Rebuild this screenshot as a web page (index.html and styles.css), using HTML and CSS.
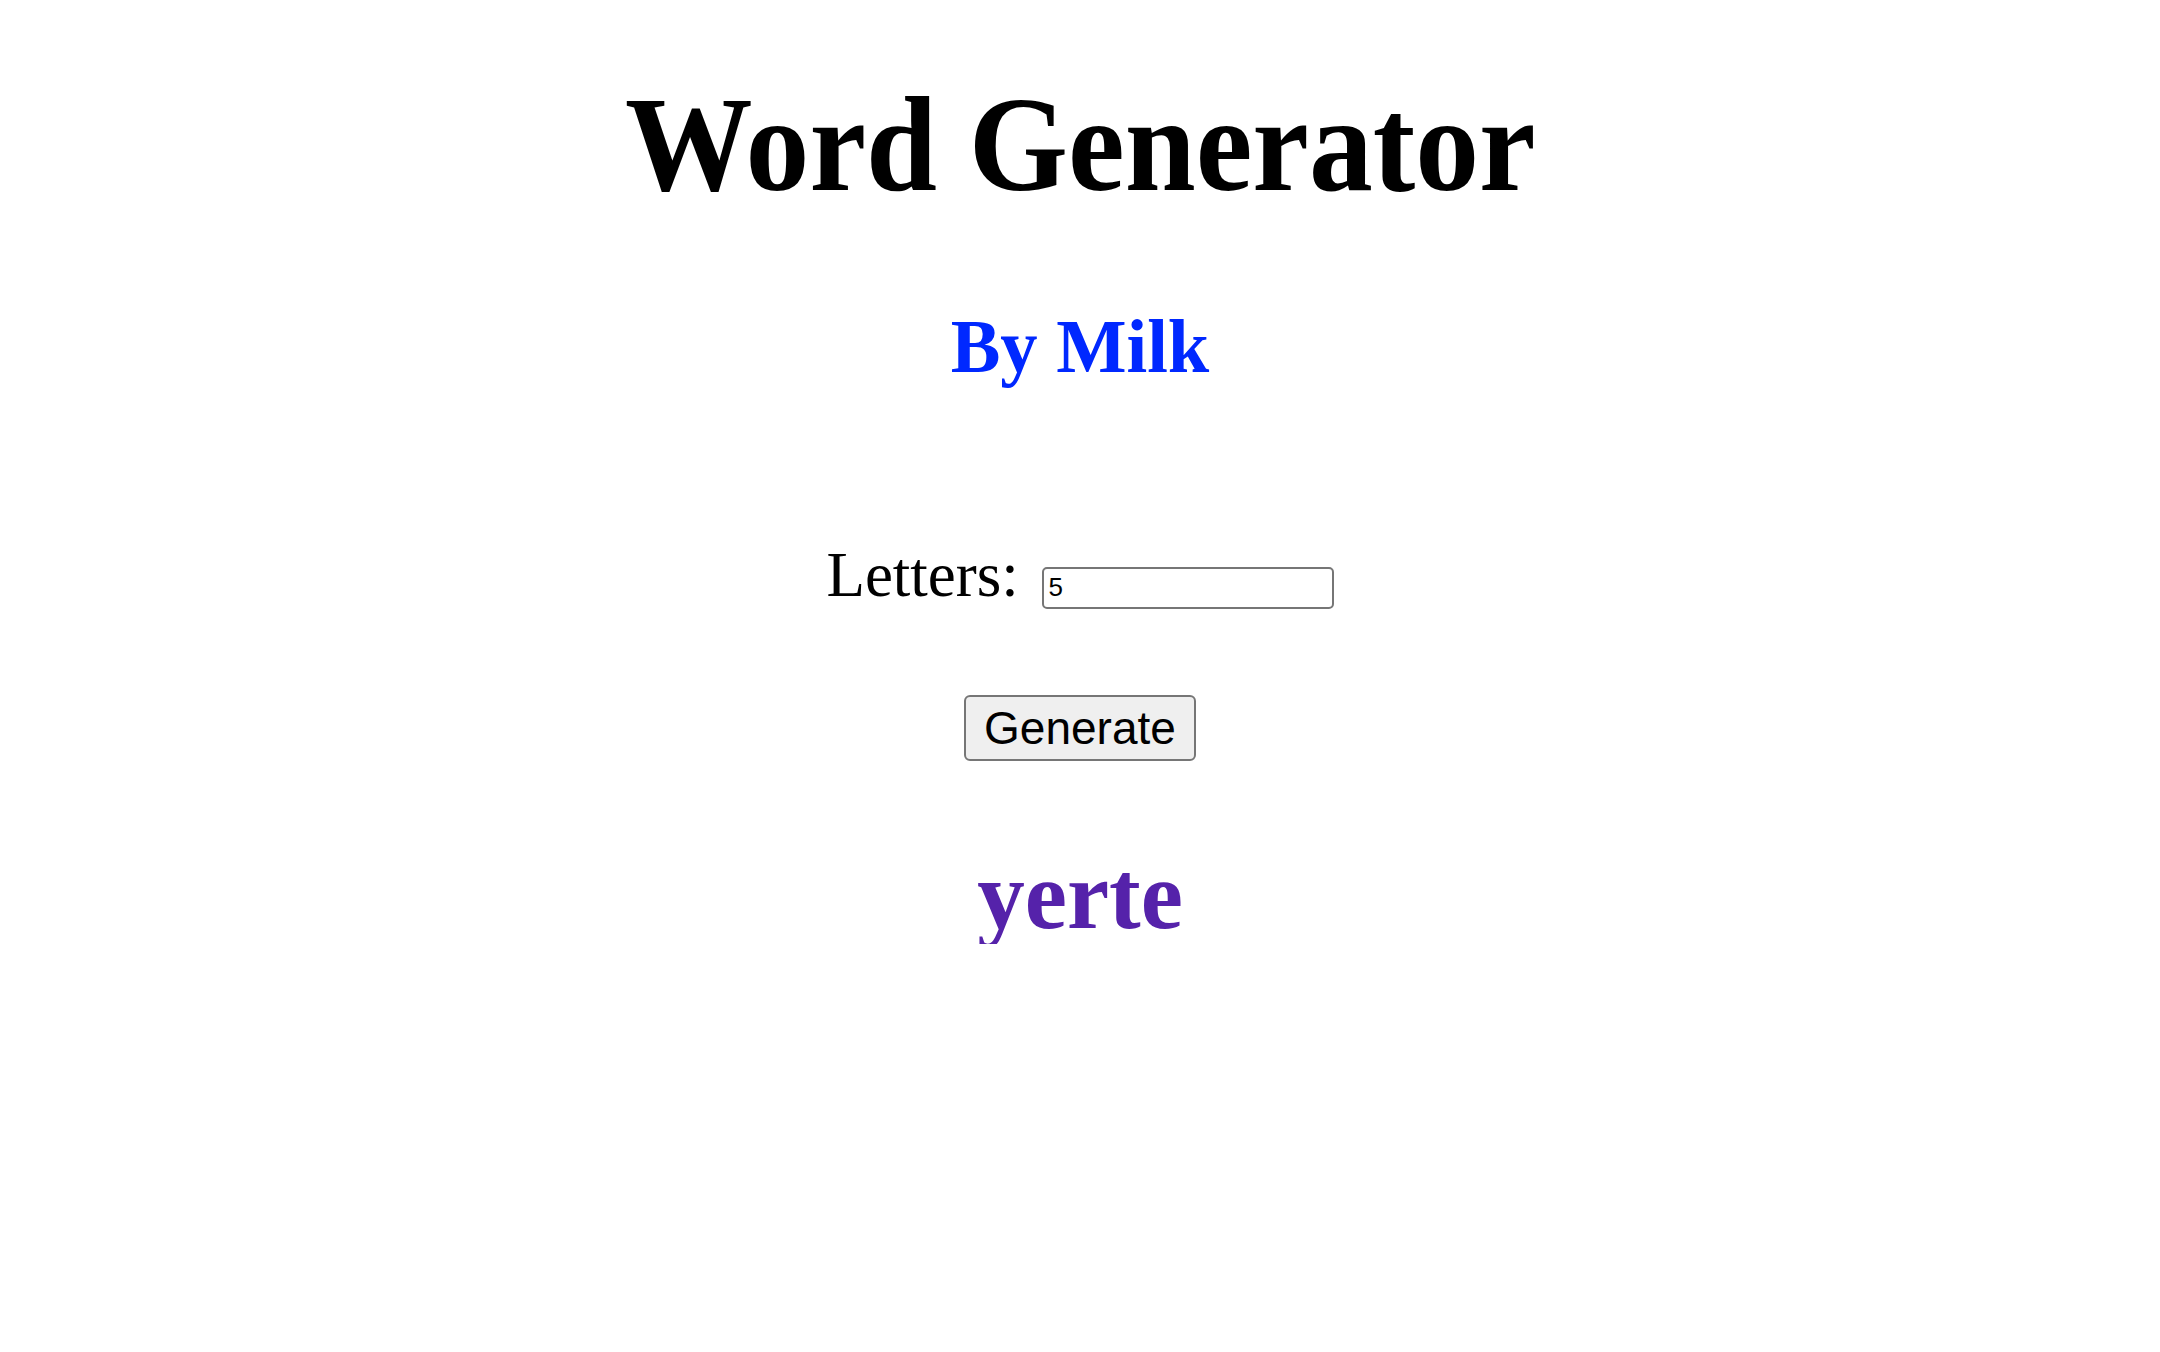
FILE: index.html
```html
<!DOCTYPE html>
<html lang="en">
<head>
<meta charset="utf-8">
<title>Word Generator</title>
<link rel="stylesheet" href="styles.css">
</head>
<body>
<main class="page">
  <h1 class="title"><span class="title-text">Word Generator</span></h1>
  <h2 class="byline">By Milk</h2>
  <div class="field-row">
    <label class="field-label" for="letters">Letters:</label>
    <input class="field-input" id="letters" type="text" value="5">
  </div>
  <div class="actions">
    <button class="generate-btn" type="button">Generate</button>
  </div>
  <h2 class="result">yerte</h2>
</main>
</body>
</html>
```

FILE: styles.css
```css
html, body {
  margin: 0;
  padding: 0;
  background: #ffffff;
}

.page {
  display: flex;
  flex-direction: column;
  align-items: center;
  font-family: "Liberation Serif", "Times New Roman", serif;
  color: #000;
}

.title {
  margin: 76px 0 0;
  font-size: 136px;
  line-height: 136px;
  font-weight: bold;
  text-align: center;
}

.title-text {
  display: inline-block;
  transform: scaleX(0.938);
  white-space: nowrap;
}

.byline {
  margin: 96px 0 0;
  font-size: 76px;
  line-height: 76px;
  font-weight: bold;
  color: #0028ff;
  transform: scaleX(0.98);
}

.field-row {
  margin-top: 160px;
  height: 63px;
  font-size: 63px;
  line-height: 63px;
  white-space: nowrap;
}

.field-label {
  font-family: "Liberation Serif", "Times New Roman", serif;
}

.field-input {
  margin: 0 0 0 7px;
  box-sizing: border-box;
  width: 292px;
  height: 42px;
  padding: 4px 5px;
  border: 2px solid #767676;
  border-radius: 5px;
  font-family: "Liberation Sans", Arial, sans-serif;
  font-size: 26px;
  line-height: 30px;
  color: #000;
  background: #fff;
  vertical-align: baseline;
}

.actions {
  margin-top: 88px;
  display: flex;
  justify-content: center;
}

.generate-btn {
  margin: 0;
  padding: 5px 18px;
  border: 2px solid #767676;
  border-radius: 6px;
  background: #efefef;
  color: #000;
  font-family: "Liberation Sans", Arial, sans-serif;
  font-size: 46px;
  line-height: 52px;
}

.result {
  margin: 85px 0 0;
  font-size: 98px;
  line-height: 98px;
  font-weight: bold;
  color: #5522aa;
  transform: scaleX(0.97);
}
```
